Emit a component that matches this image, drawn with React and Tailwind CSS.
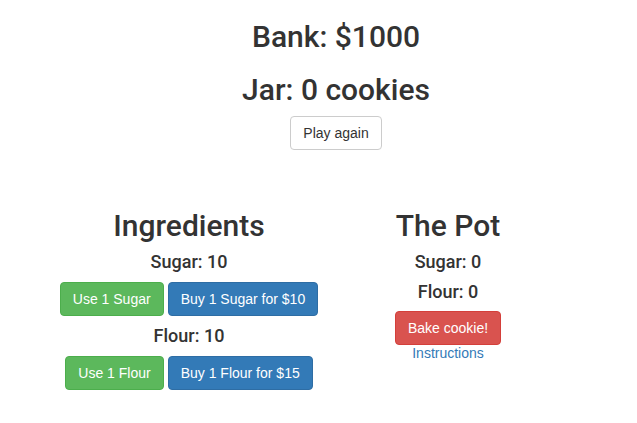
import React from "react";

const base = "inline-flex items-center justify-center h-[34px] px-[12px] text-[14px] leading-[20px] rounded-[4px] border whitespace-nowrap";
const btnDefault = base + " bg-white border-[#cccccc] text-[#333333]";
const btnSuccess = base + " bg-[#5cb85c] border-[#4cae4c] text-white";
const btnPrimary = base + " bg-[#337ab7] border-[#2e6da4] text-white";
const btnDanger = base + " bg-[#d9534f] border-[#d43f3a] text-white";

const h2 = "text-[30px] leading-[33px] font-medium font-['Roboto',sans-serif]";
const h4 = "text-[18px] leading-[19.8px] font-medium font-['Roboto',sans-serif]";

export default function App() {
  return (
    <div
      className="w-[637px] h-[423px] bg-white text-[#333333] overflow-hidden"
      style={{ fontFamily: '"Liberation Sans", Arial, sans-serif' }}
    >
      <div className="flex flex-col items-center pl-[35px] pt-[20px]">
        <h2 className={h2}>Bank: $1000</h2>
        <h2 className={h2 + " mt-[20px]"}>Jar: 0 cookies</h2>
        <button className={btnDefault + " mt-[10px]"}>Play again</button>
      </div>
      <div className="w-[518px] mx-auto grid grid-cols-2 mt-[59px]">
        <div className="flex flex-col items-center">
          <h2 className={h2}>Ingredients</h2>
          <h4 className={h4 + " mt-[10px]"}>Sugar: 10</h4>
          <div className="flex gap-[4px] mt-[10px]">
            <button className={btnSuccess}>Use 1 Sugar</button>
            <button className={btnPrimary}>Buy 1 Sugar for $10</button>
          </div>
          <h4 className={h4 + " mt-[10px]"}>Flour: 10</h4>
          <div className="flex gap-[4px] mt-[10px]">
            <button className={btnSuccess}>Use 1 Flour</button>
            <button className={btnPrimary}>Buy 1 Flour for $15</button>
          </div>
        </div>
        <div className="flex flex-col items-center">
          <h2 className={h2}>The Pot</h2>
          <h4 className={h4 + " mt-[10px]"}>Sugar: 0</h4>
          <h4 className={h4 + " mt-[10px]"}>Flour: 0</h4>
          <button className={btnDanger + " mt-[9px]"}>Bake cookie!</button>
          <a href="#" className="text-[14px] leading-[20px] text-[#337ab7] -mt-[2px]">Instructions</a>
        </div>
      </div>
    </div>
  );
}
